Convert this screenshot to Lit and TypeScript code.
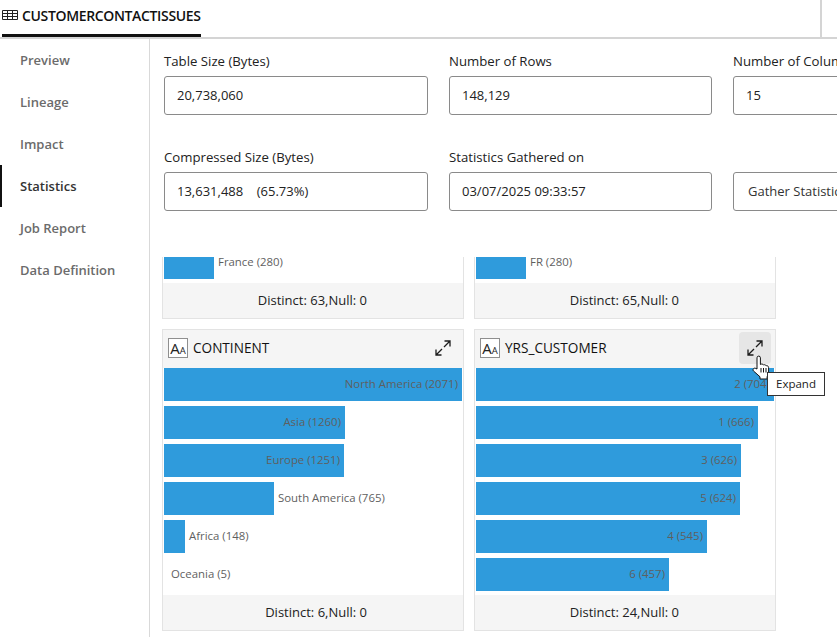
import { css, html, LitElement, nothing, svg } from 'lit'
import { customElement, property } from 'lit/decorators.js'

type Row = { label: string; value: number; width: number }

const FONT = css`"Open Sans", "Noto Sans", sans-serif`

const expandIcon = svg`
  <path d="M9 7 L14.500 1.500 M9.500 1 H15 V6.500 M7 9 L1.500 14.500 M1 9.500 V15 H6.500" fill="none" stroke="#1c1c1c" stroke-width="1.300"/>
`

@customElement('stat-card')
export class StatCard extends LitElement {
    static styles = css`
      :host {
        display: block;
      }

      .card {
        display: flex;
        flex-direction: column;
        border: 1px solid #e3e3e3;
        background: #fff;
      }

      .card.cut {
        border-top: none;
      }

      .head {
        display: flex;
        align-items: center;
        box-sizing: border-box;
        height: 38px;
        padding: 0 5px 2px;
        background: #f5f5f5;
        color: #111;
        font-size: 13.6px;
      }

      .type {
        display: flex;
        align-items: baseline;
        justify-content: center;
        box-sizing: border-box;
        width: 20px;
        height: 20px;
        margin-right: 5px;
        border: 1px solid #8f8f8f;
        background: #fff;
        color: #222;
        font-size: 15px;
        line-height: 18px;
      }

      .type small {
        font-size: 9.5px;
      }

      .name {
        flex: 1;
        padding-bottom: 1px;
      }

      .expand {
        display: flex;
        align-items: center;
        justify-content: center;
        width: 32px;
        height: 32px;
        margin-right: -1px;
        border-radius: 4px;
      }

      .expand.hover {
        background: #e6e6e6;
      }

      .rows {
        display: flex;
        flex-direction: column;
        gap: 5px;
        padding: 0 1px 4px;
      }

      .row {
        display: flex;
        align-items: center;
        height: 33px;
        color: #5f5f5f;
        font-size: 11.4px;
        white-space: nowrap;
      }

      .row.cut {
        height: 22px;
        align-items: flex-start;
      }

      .row.cut .outside {
        padding-bottom: 0;
        line-height: 10px;
      }

      .bar {
        display: flex;
        align-items: center;
        justify-content: flex-end;
        height: 100%;
        background: #2f9bdc;
      }

      .bar span {
        padding: 0 4px 3px 0;
      }

      .outside {
        padding: 0 0 3px 4px;
      }

      .outside.none {
        padding-left: 7px;
      }

      .foot {
        display: flex;
        align-items: center;
        justify-content: flex-end;
        box-sizing: border-box;
        height: 35px;
        padding: 0 96px 1px 0;
        background: #f5f5f5;
        color: #222;
        font-size: 13px;
      }
    `

    @property() name = ''
    @property() distinct = ''
    @property({ type: Array }) rows: Row[] = []
    @property({ type: Boolean }) cut = false
    @property({ type: Boolean }) hover = false

    renderRow (r: Row) {
        const text = `${r.label} (${r.value})`
        const inside = r.width > 150
        return html`
            <div class="row ${this.cut ? 'cut' : ''}">
                ${r.width > 0 ? html`<div class="bar" style="width:${r.width}px">${inside ? html`<span>${text}</span>` : nothing}</div>` : nothing}
                ${inside ? nothing : html`<div class="outside ${r.width > 0 ? '' : 'none'}">${text}</div>`}
            </div>
        `
    }

    render () {
        return html`
            <div class="card ${this.cut ? 'cut' : ''}">
                ${this.cut ? nothing : html`
                    <div class="head">
                        <span class="type">A<small>A</small></span>
                        <span class="name">${this.name}</span>
                        <span class="expand ${this.hover ? 'hover' : ''}">
                            <svg width="16" height="16" viewBox="0 0 16 16">${expandIcon}</svg>
                        </span>
                    </div>
                `}
                <div class="rows">${this.rows.map(r => this.renderRow(r))}</div>
                <div class="foot">Distinct: ${this.distinct},Null: 0</div>
            </div>
        `
    }
}

@customElement('app-root')
export class AppRoot extends LitElement {
    static styles = css`
      :host {
        display: flex;
        flex-direction: column;
        position: relative;
        width: 837px;
        height: 637px;
        overflow: hidden;
        background: #fff;
        font-family: ${FONT};
        color: #222;
      }

      .top {
        display: flex;
        flex: none;
        justify-content: space-between;
        height: 37px;
        border-bottom: 2px solid #d4d4d4;
      }

      .tab {
        display: flex;
        align-items: center;
        gap: 4px;
        box-sizing: border-box;
        height: 37px;
        margin-left: 2px;
        padding-bottom: 4px;
        border-bottom: 3px solid #111;
        color: #111;
        font-size: 14px;
        font-weight: 600;
        letter-spacing: -0.35px;
      }

      .top-end {
        width: 15px;
        border-left: 2px solid #d4d4d4;
      }

      .body {
        display: flex;
        flex: 1;
        min-height: 0;
      }

      .side {
        display: flex;
        flex: none;
        flex-direction: column;
        width: 149px;
        border-right: 1px solid #d9d9d9;
      }

      .side a {
        display: flex;
        align-items: center;
        height: 42px;
        padding-left: 20px;
        color: #6b6b6b;
        font-size: 13px;
        font-weight: 600;
      }

      .side a.on {
        padding-left: 18px;
        border-left: 2px solid #111;
        color: #333;
      }

      .main {
        flex: 1;
        display: flex;
        flex-direction: column;
        min-width: 0;
      }

      .form {
        display: grid;
        flex: none;
        grid-template-columns: 264px 263px 264px;
        align-content: start;
        column-gap: 21px;
        row-gap: 34px;
        height: 218px;
        padding: 14px 0 0 14px;
        box-sizing: border-box;
      }

      .field label {
        display: block;
        height: 23px;
        font-size: 13.2px;
        line-height: 16px;
        white-space: nowrap;
      }

      .input {
        display: flex;
        align-items: center;
        box-sizing: border-box;
        height: 39px;
        padding: 0 0 1px 12px;
        border: 1px solid #8a8a8a;
        border-radius: 3px;
        font-size: 13px;
        white-space: pre;
      }

      .gather {
        align-self: end;
        color: #333;
        padding-left: 14px;
      }

      .charts {
        display: grid;
        flex: 1;
        grid-template-columns: 302px 302px;
        grid-auto-rows: min-content;
        gap: 10px;
        padding-left: 12px;
        overflow: hidden;
      }

      .tip {
        position: absolute;
        left: 767px;
        top: 372px;
        box-sizing: border-box;
        padding: 3px 8px;
        height: 24px;
        border: 1px solid #333;
        background: #fff;
        font-size: 11.5px;
      }

      .hand {
        position: absolute;
        left: 752px;
        top: 355px;
      }
    `

    scale (rows: [string, number][]): Row[] {
        const max = rows[0][1]
        return rows.map(([label, value]) => ({ label, value, width: value < 10 ? 0 : Math.round(value / max * 298) }))
    }

    field (label: string, value: string) {
        return html`<div class="field"><label>${label}</label><div class="input">${value}</div></div>`
    }

    render () {
        const nav = ['Preview', 'Lineage', 'Impact', 'Statistics', 'Job Report', 'Data Definition']
        return html`
            <div class="top">
                <div class="tab">
                    <svg width="16" height="10" viewBox="0 0 16 10">
                        <path d="M.5.5h15v9H.5zM.5 3.500h15M.5 6.500h15M5.500.5v9M10.500.5v9" fill="none" stroke="#222"/>
                    </svg>
                    CUSTOMERCONTACTISSUES
                </div>
                <div class="top-end"></div>
            </div>
            <div class="body">
                <nav class="side">
                    ${nav.map(n => html`<a class=${n === 'Statistics' ? 'on' : ''}>${n}</a>`)}
                </nav>
                <div class="main">
                    <div class="form">
                        ${this.field('Table Size (Bytes)', '20,738,060')}
                        ${this.field('Number of Rows', '148,129')}
                        ${this.field('Number of Columns', '15')}
                        ${this.field('Compressed Size (Bytes)', '13,631,488    (65.73%)')}
                        ${this.field('Statistics Gathered on', '03/07/2025 09:33:57')}
                        <div class="input gather">Gather Statistics</div>
                    </div>
                    <div class="charts">
                        <stat-card cut distinct="63" .rows=${[{ label: 'France', value: 280, width: 50 }]}></stat-card>
                        <stat-card cut distinct="65" .rows=${[{ label: 'FR', value: 280, width: 50 }]}></stat-card>
                        <stat-card name="CONTINENT" distinct="6" .rows=${this.scale([
                            ['North America', 2071], ['Asia', 1260], ['Europe', 1251],
                            ['South America', 765], ['Africa', 148], ['Oceania', 5]
                        ])}></stat-card>
                        <stat-card hover name="YRS_CUSTOMER" distinct="24" .rows=${this.scale([
                            ['2', 704], ['1', 666], ['3', 626], ['5', 624], ['4', 545], ['6', 457]
                        ])}></stat-card>
                    </div>
                </div>
            </div>
            <svg class="hand" width="19" height="25" viewBox="0 0 19 25">
                <path d="M5 14V2.800a1.700 1.700 0 0 1 3.400 0V9.500l.6-.3c1-.4 2 0 2.300.8l.5-.2c1-.3 2 .2 2.300 1l.5-.1c1.100-.1 2 .7 2 1.900v4.400c0 2.200-.7 3.300-1.500 4.800V24H8v-2.200L1.500 16c-1.300-1.500.4-3.600 2.200-2.600z" fill="#fff" stroke="#111"/>
                <path d="M9 13v4.500M11.500 13v4.500M14 13v4.500" stroke="#111" fill="none"/>
            </svg>
            <div class="tip">Expand</div>
        `
    }
}
